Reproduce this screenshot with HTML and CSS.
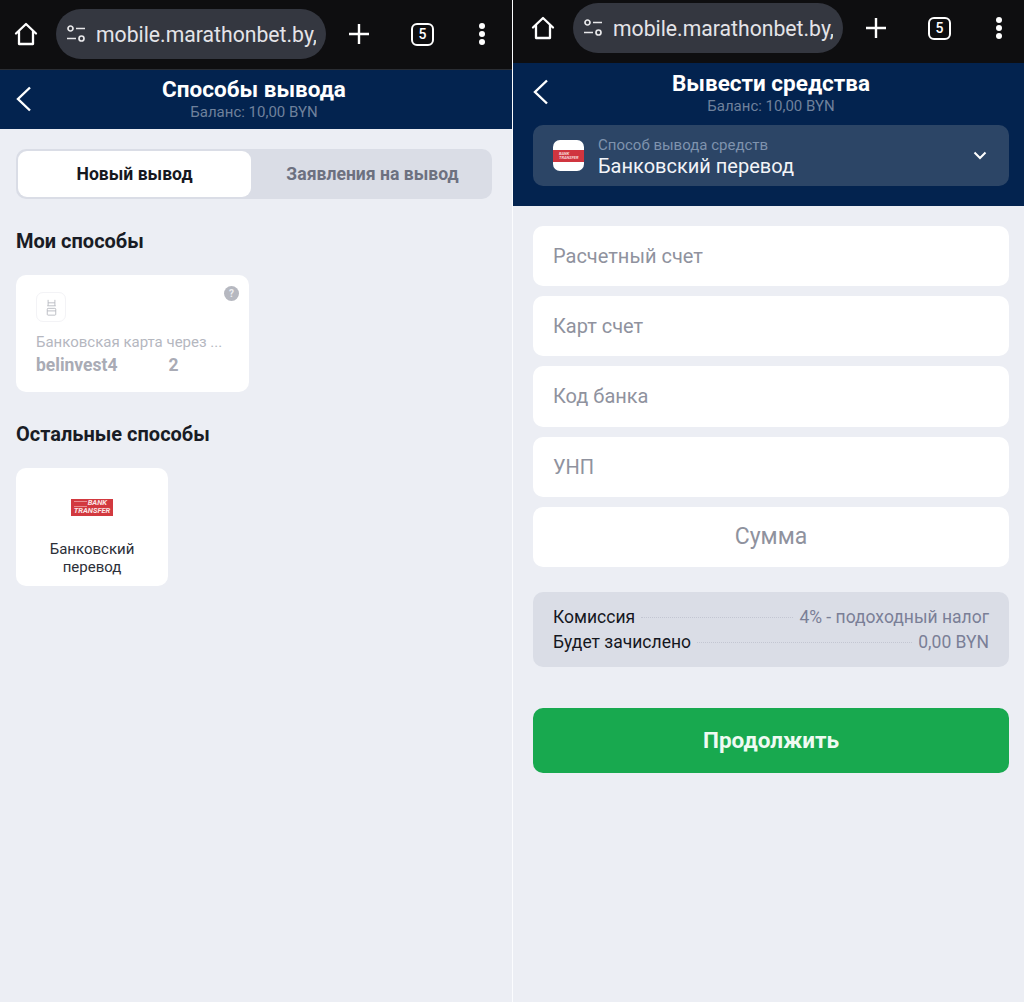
FILE: index.html
```html
<!DOCTYPE html>
<html lang="ru">
<head>
<meta charset="UTF-8">
<meta name="viewport" content="width=device-width, initial-scale=1.0">
<title>Marathonbet</title>
<link rel="stylesheet" href="styles.css">
</head>
<body>

<div class="screens">

    <!-- left phone -->
    <div class="pane">
        <div class="toolbar toolbar-left">
            <svg class="home" width="26" height="26" viewBox="0 0 26 26"><path d="M3 12.500 13 3l10 9.500M6 10v13h14V10" fill="none" stroke="#fff" stroke-width="2.300" stroke-linejoin="round" stroke-linecap="round"/></svg>
            <div class="url">
                <svg width="20" height="18" viewBox="0 0 20 18"><circle cx="4.500" cy="3.500" r="2.500" fill="none" stroke="#e8e8ea" stroke-width="1.700"/><path d="M10 3.500h9M1 13.500h9" stroke="#e8e8ea" stroke-width="1.700"/><circle cx="15.500" cy="13.500" r="2.500" fill="none" stroke="#e8e8ea" stroke-width="1.700"/></svg>
                <span class="url-text">mobile.marathonbet.by,</span>
            </div>
            <svg class="plus" width="22" height="22" viewBox="0 0 22 22"><path d="M11 1v20M1 11h20" stroke="#fff" stroke-width="2.400"/></svg>
            <div class="tabs-count">5</div>
            <div class="dots"><i></i><i></i><i></i></div>
        </div>
        <div class="header header-small">
            <svg class="back" width="16" height="26" viewBox="0 0 16 26"><path d="M14 1.500 2 13l12 11.500" fill="none" stroke="#fff" stroke-width="2.400"/></svg>
            <div class="title">Способы вывода</div>
            <div class="balance">Баланс: 10,00 BYN</div>
        </div>
        <div class="content">
            <div class="switch">
                <div class="switch-item active">Новый вывод</div>
                <div class="switch-item">Заявления на вывод</div>
            </div>

            <h3 class="section-title">Мои способы</h3>
            <div class="my-card">
                <div class="help">?</div>
                <div class="my-icon">
                    <svg width="11" height="17" viewBox="0 0 12 20"><path d="M2 1v7M10 1v7M2 4.500h8M1 8h10" stroke="#b4b6bd" fill="none"/><rect x="1" y="11" width="10" height="8" rx="1" fill="none" stroke="#b4b6bd"/><path d="M1 14h10" stroke="#b4b6bd"/></svg>
                </div>
                <div class="my-name">Банковская карта через ...</div>
                <div class="my-number"><span>belinvest4</span><span>2</span></div>
            </div>

            <h3 class="section-title section-other">Остальные способы</h3>
            <div class="method-card">
                <div class="bank-logo"><span class="bank-word">BANK</span><span>TRANSFER</span></div>
                <div class="method-name">Банковский перевод</div>
            </div>
        </div>
    </div>

    <!-- right phone -->
    <div class="pane pane-right">
        <div class="toolbar toolbar-right">
            <svg class="home" width="26" height="26" viewBox="0 0 26 26"><path d="M3 12.500 13 3l10 9.500M6 10v13h14V10" fill="none" stroke="#fff" stroke-width="2.300" stroke-linejoin="round" stroke-linecap="round"/></svg>
            <div class="url">
                <svg width="20" height="18" viewBox="0 0 20 18"><circle cx="4.500" cy="3.500" r="2.500" fill="none" stroke="#e8e8ea" stroke-width="1.700"/><path d="M10 3.500h9M1 13.500h9" stroke="#e8e8ea" stroke-width="1.700"/><circle cx="15.500" cy="13.500" r="2.500" fill="none" stroke="#e8e8ea" stroke-width="1.700"/></svg>
                <span class="url-text">mobile.marathonbet.by,</span>
            </div>
            <svg class="plus" width="22" height="22" viewBox="0 0 22 22"><path d="M11 1v20M1 11h20" stroke="#fff" stroke-width="2.400"/></svg>
            <div class="tabs-count">5</div>
            <div class="dots"><i></i><i></i><i></i></div>
        </div>
        <div class="header header-big">
            <svg class="back" width="16" height="26" viewBox="0 0 16 26"><path d="M14 1.500 2 13l12 11.500" fill="none" stroke="#fff" stroke-width="2.400"/></svg>
            <div class="title">Вывести средства</div>
            <div class="balance">Баланс: 10,00 BYN</div>
            <div class="method-select">
                <div class="select-icon"><div class="select-logo">BANK<br>TRANSFER</div></div>
                <div class="select-text">
                    <div class="select-label">Способ вывода средств</div>
                    <div class="select-value">Банковский перевод</div>
                </div>
                <svg class="chevron" width="14" height="9" viewBox="0 0 14 9"><path d="M1.500 1.500 7 7l5.500-5.500" fill="none" stroke="#fff" stroke-width="2"/></svg>
            </div>
        </div>
        <div class="form">
            <div class="field">Расчетный счет</div>
            <div class="field">Карт счет</div>
            <div class="field">Код банка</div>
            <div class="field">УНП</div>
            <div class="field field-sum">Сумма</div>

            <div class="info">
                <div class="info-row"><span class="info-label">Комиссия</span><span class="info-line"></span><span class="info-value">4% - подоходный налог</span></div>
                <div class="info-row"><span class="info-label">Будет зачислено</span><span class="info-line"></span><span class="info-value">0,00 BYN</span></div>
            </div>

            <button class="continue">Продолжить</button>
        </div>
    </div>

</div>

</body>
</html>
```

FILE: styles.css
```css
* {
    box-sizing: border-box;
}

body {
    margin: 0;
    font-family: Roboto, "Liberation Sans", sans-serif;
    background-color: #eceef4;
}

.screens {
    display: flex;
    height: 1002px;
    overflow: hidden;
}

.pane {
    width: 512px;
    background-color: #eceef4;
}

.pane-right {
    border-left: 1px solid #fbfcfe;
}

/* browser bar */
.toolbar {
    display: flex;
    align-items: center;
    background-color: #0e0e10;
    border-bottom: 1px solid #2a2d33;
}

.toolbar-left {
    height: 70px;
    padding: 0 0 1px 13px;
}

.toolbar-right {
    height: 64px;
    padding: 0 0 7px 17px;
    margin-bottom: -1px;
}

.home {
    flex: none;
}

.url {
    display: flex;
    align-items: center;
    flex: none;
    width: 270px;
    height: 50px;
    margin-left: 17px;
    padding-left: 10px;
    border-radius: 25px;
    background-color: #343740;
}

.url-text {
    margin-left: 10px;
    width: 220px;
    overflow: hidden;
    white-space: nowrap;
    font-size: 21.200px;
    color: #e4e4e8;
}

.plus {
    margin-left: 22px;
}

.tabs-count {
    width: 23px;
    height: 23px;
    margin-left: 41px;
    border: 2.300px solid #fff;
    border-radius: 6px;
    font-size: 14px;
    font-weight: 500;
    line-height: 19px;
    text-align: center;
    color: #fff;
}

.dots {
    display: flex;
    flex-direction: column;
    gap: 2px;
    margin-left: 45px;
}

.dots i {
    display: block;
    width: 6px;
    height: 6px;
    border-radius: 50%;
    background-color: #fff;
}

/* page header */
.header {
    position: relative;
    background-color: #03234f;
    text-align: center;
}

.header-small {
    height: 59px;
    padding: 6px 4px 0 0;
}

.header-big {
    height: 143px;
    padding: 7px 15px 0 20px;
}

.back {
    position: absolute;
    left: 16px;
    top: 16px;
}

.pane-right .back {
    left: 20px;
}

.title {
    font-size: 22.500px;
    font-weight: 700;
    line-height: 26px;
    color: #fff;
}

.balance {
    font-size: 15px;
    line-height: 17px;
    margin-top: 2px;
    color: #6f819c;
}

.method-select {
    display: flex;
    align-items: center;
    height: 61px;
    margin-top: 10px;
    padding: 0 22px 0 20px;
    border-radius: 10px;
    background-color: #2c4566;
    text-align: left;
}

.select-icon {
    display: flex;
    align-items: center;
    width: 31px;
    height: 31px;
    border-radius: 7px;
    background-color: #fff;
}

.select-logo {
    width: 100%;
    padding: 2px 0 2px 6px;
    background-color: #d0353f;
    font-size: 4px;
    font-weight: 700;
    font-style: italic;
    line-height: 4px;
    color: #f6d6d8;
}

.select-text {
    flex: 1;
    margin: 3px 0 0 14px;
}

.select-label {
    font-size: 15px;
    line-height: 17px;
    color: #7f93ae;
}

.select-value {
    font-size: 20px;
    line-height: 24px;
    color: #f2f4f8;
}

/* left page */
.content {
    padding: 20px 20px 0 16px;
}

.switch {
    display: flex;
    height: 50px;
    padding: 2px 0 2px 2px;
    border-radius: 10px;
    background-color: #dadde6;
}

.switch-item {
    flex: 1;
    padding-left: 2px;
    font-size: 17.600px;
    font-weight: 700;
    line-height: 46px;
    text-align: center;
    color: #6d7180;
}

.switch-item.active {
    flex: none;
    width: 233px;
    padding-left: 0;
    border-radius: 9px;
    background-color: #fff;
    color: #16181f;
}

.section-title {
    margin: 29px 0 21px;
    font-size: 20px;
    font-weight: 700;
    line-height: 26px;
    color: #191c25;
}

.section-other {
    margin-top: 29px;
}

.my-card {
    position: relative;
    width: 233px;
    height: 117px;
    padding: 17px 20px 0;
    border-radius: 10px;
    background-color: #fff;
}

.help {
    position: absolute;
    right: 10px;
    top: 11px;
    width: 15px;
    height: 15px;
    border-radius: 50%;
    background-color: #b6b8c0;
    font-size: 10px;
    font-weight: 700;
    line-height: 15px;
    text-align: center;
    color: #eceef2;
}

.my-icon {
    display: flex;
    align-items: center;
    justify-content: center;
    width: 30px;
    height: 30px;
    border: 1px solid #f3f3f6;
    border-radius: 7px;
}

.my-name {
    margin-top: 11px;
    font-size: 15px;
    line-height: 18px;
    color: #b5b7bf;
    white-space: nowrap;
}

.my-number {
    display: flex;
    gap: 51px;
    margin-top: 3px;
    font-size: 17.500px;
    font-weight: 700;
    line-height: 22px;
    color: #a9abb5;
}

.method-card {
    display: flex;
    flex-direction: column;
    align-items: center;
    width: 152px;
    height: 118px;
    padding-top: 31px;
    border-radius: 10px;
    background-color: #fff;
}

.bank-logo {
    position: relative;
    display: flex;
    flex-direction: column;
    align-items: center;
    flex: none;
    width: 42px;
    height: 17px;
    background-color: #d2393f;
    font-size: 7.500px;
    font-weight: 700;
    font-style: italic;
    line-height: 8px;
    color: #fbe4e4;
}

/* the thin speed lines left of BANK */
.bank-logo::before {
    content: "";
    position: absolute;
    left: 3px;
    top: 2px;
    width: 13px;
    height: 4px;
    border-top: 1px solid #e98d90;
    border-bottom: 1px solid #e98d90;
}

.bank-word {
    align-self: flex-end;
    margin-right: 6px;
}

.method-name {
    width: 110px;
    margin-top: 24px;
    font-size: 15px;
    line-height: 18px;
    text-align: center;
    color: #2c2f38;
}

/* right page */
.form {
    display: flex;
    flex-direction: column;
    gap: 10px;
    padding: 19.500px 15px 0 20px;
}

.field {
    height: 60.400px;
    padding-left: 20px;
    border-radius: 10px;
    background-color: #fff;
    font-size: 20px;
    line-height: 60px;
    color: #8f929e;
}

.field-sum {
    padding-left: 0;
    font-size: 23px;
    text-align: center;
}

.info {
    display: flex;
    flex-direction: column;
    gap: 3px;
    height: 75px;
    margin-top: 14.500px;
    padding: 14px 20px 0;
    border-radius: 10px;
    background-color: #dadde6;
    font-size: 17.500px;
    line-height: 22.500px;
}

.info-row {
    display: flex;
    align-items: center;
}

.info-label {
    color: #15171e;
}

.info-line {
    flex: 1;
    margin: 0 6px;
    border-top: 1px dotted #c3c6d2;
}

.info-value {
    color: #7a7f97;
}

.continue {
    height: 65px;
    margin-top: 31px;
    border: none;
    border-radius: 10px;
    background-color: #18a94f;
    font-family: inherit;
    font-size: 22.500px;
    font-weight: 700;
    color: #eefaf2;
}
```
